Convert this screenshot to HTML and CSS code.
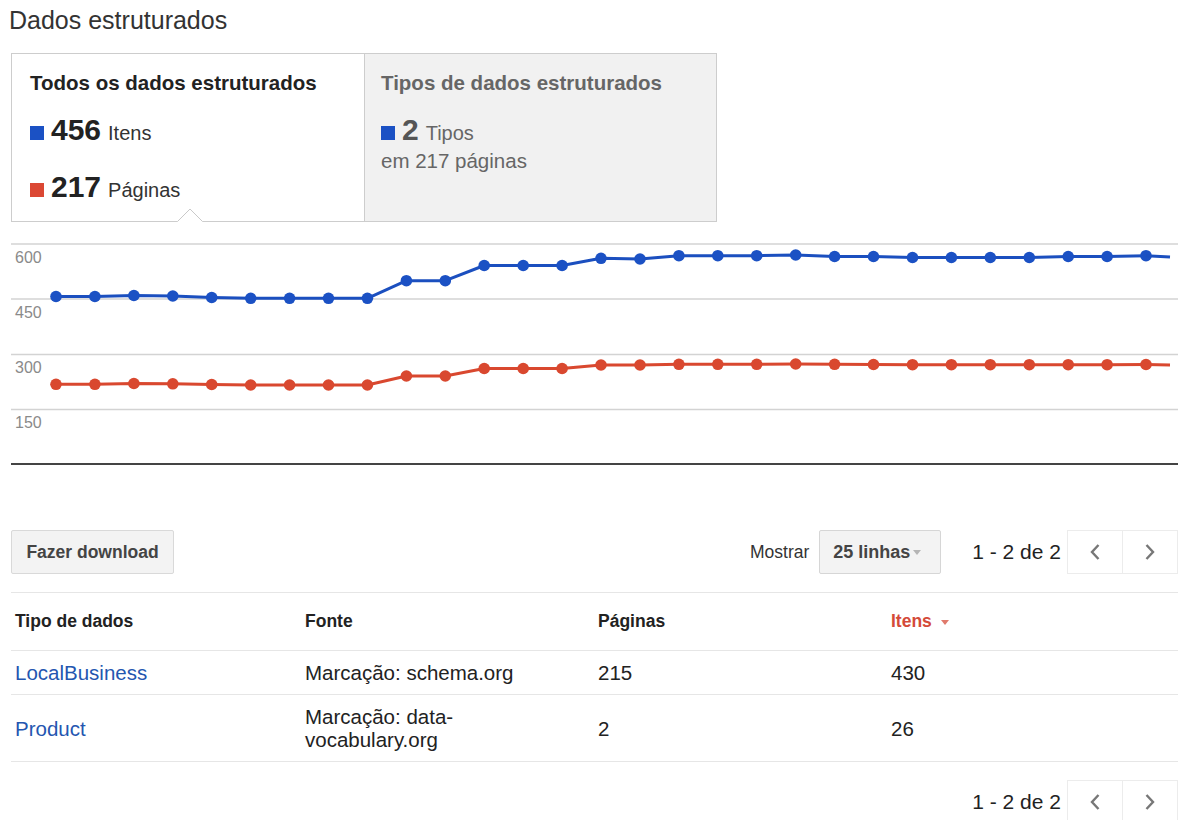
FILE: index.html
```html
<!DOCTYPE html>
<html lang="pt-BR">
<head>
<meta charset="utf-8">
<title>Dados estruturados</title>
<link rel="stylesheet" href="styles.css">
</head>
<body>
<div class="page">
  <h1 class="title">Dados estruturados</h1>

  <div class="tabs">
    <div class="tab tab-active">
      <div class="tab-title">Todos os dados estruturados</div>
      <div class="metric">
        <span class="swatch swatch-blue"></span><span class="metric-value">456</span><span class="metric-unit">Itens</span>
      </div>
      <div class="metric metric-second">
        <span class="swatch swatch-red"></span><span class="metric-value">217</span><span class="metric-unit">Páginas</span>
      </div>
      <svg class="tab-notch" width="26" height="14" viewBox="0 0 26 14">
        <polygon points="0,14 13,1.5 26,14" fill="#fff"/>
        <polyline points="0.5,13.5 13,1 25.5,13.5" fill="none" stroke="#c9c9c9" stroke-width="1"/>
      </svg>
    </div>
    <div class="tab tab-idle">
      <div class="tab-title">Tipos de dados estruturados</div>
      <div class="metric">
        <span class="swatch swatch-blue"></span><span class="metric-value">2</span><span class="metric-unit">Tipos</span>
      </div>
      <div class="metric-note">em 217 páginas</div>
    </div>
  </div>

  <svg class="chart" width="1167" height="250" viewBox="11 222 1167 250">
    <defs>
      <marker id="dot-blue" markerWidth="14" markerHeight="14" refX="7" refY="7" markerUnits="userSpaceOnUse">
        <circle cx="7" cy="7" r="5.8" fill="#1b51c4"/>
      </marker>
      <marker id="dot-red" markerWidth="14" markerHeight="14" refX="7" refY="7" markerUnits="userSpaceOnUse">
        <circle cx="7" cy="7" r="5.8" fill="#d9482f"/>
      </marker>
    </defs>

    <!-- grid -->
    <g class="grid">
      <line x1="11" y1="244" x2="1178" y2="244"/>
      <line x1="11" y1="299" x2="1178" y2="299"/>
      <line x1="11" y1="354.5" x2="1178" y2="354.5"/>
      <line x1="11" y1="409.5" x2="1178" y2="409.5"/>
    </g>
    <line class="axis" x1="11" y1="464" x2="1178" y2="464"/>

    <g class="axis-label">
      <text x="15" y="263">600</text>
      <text x="15" y="318">450</text>
      <text x="15" y="373">300</text>
      <text x="15" y="428">150</text>
    </g>

    <!-- Itens -->
    <polyline class="series series-blue" marker-start="url(#dot-blue)" marker-mid="url(#dot-blue)" marker-end="url(#dot-blue)"
      points="56,296.5 94.9,296.5 133.9,295.5 172.8,296 211.7,297.5 250.7,298.3 289.6,298.3 328.5,298.3 367.4,298.3 406.4,280.7 445.3,280.7 484.2,265.5 523.2,265.5 562.1,265.5 601,258.3 640,259 678.9,255.7 717.8,255.7 756.7,255.7 795.7,255 834.6,256.5 873.5,256.5 912.5,257.5 951.4,257.5 990.3,257.5 1029.3,257.5 1068.2,256.5 1107.1,256.5 1146,255.7"/>
    <line class="series series-blue" x1="1146" y1="255.7" x2="1170" y2="257"/>

    <!-- Páginas -->
    <polyline class="series series-red" marker-start="url(#dot-red)" marker-mid="url(#dot-red)" marker-end="url(#dot-red)"
      points="56,384.3 94.9,384.3 133.9,383.5 172.8,383.8 211.7,384.5 250.7,385 289.6,385 328.5,385 367.4,385 406.4,376 445.3,376 484.2,368.5 523.2,368.5 562.1,368.5 601,365 640,365 678.9,364.3 717.8,364.3 756.7,364.3 795.7,364 834.6,364.3 873.5,364.5 912.5,364.7 951.4,364.7 990.3,364.7 1029.3,364.7 1068.2,364.7 1107.1,364.7 1146,364.5"/>
    <line class="series series-red" x1="1146" y1="364.5" x2="1170" y2="365"/>
  </svg>

  <div class="toolbar">
    <button class="btn-download" type="button">Fazer download</button>
    <div class="toolbar-right">
      <span class="show-label">Mostrar</span>
      <div class="rows-select"><span>25 linhas</span><span class="select-arrow"></span></div>
      <span class="range">1 - 2 de 2</span>
      <div class="pager">
        <button class="pager-btn" type="button" aria-label="Anterior">
          <svg width="12" height="18" viewBox="0 0 12 18"><polyline points="9.5,2 3,9 9.5,16" fill="none" stroke="#777" stroke-width="2.4"/></svg>
        </button>
        <button class="pager-btn" type="button" aria-label="Próxima">
          <svg width="12" height="18" viewBox="0 0 12 18"><polyline points="2.5,2 9,9 2.5,16" fill="none" stroke="#777" stroke-width="2.4"/></svg>
        </button>
      </div>
    </div>
  </div>

  <table class="data-table">
    <colgroup>
      <col class="col-type">
      <col class="col-source">
      <col class="col-pages">
      <col class="col-items">
    </colgroup>
    <thead>
      <tr>
        <th>Tipo de dados</th>
        <th>Fonte</th>
        <th>Páginas</th>
        <th class="sorted">Itens<span class="sort-arrow"></span></th>
      </tr>
    </thead>
    <tbody>
      <tr>
        <td><a href="#">LocalBusiness</a></td>
        <td>Marcação: schema.org</td>
        <td>215</td>
        <td>430</td>
      </tr>
      <tr>
        <td><a href="#">Product</a></td>
        <td>Marcação: data-vocabulary.org</td>
        <td>2</td>
        <td>26</td>
      </tr>
    </tbody>
  </table>

  <div class="pager-row">
    <span class="range">1 - 2 de 2</span>
    <div class="pager">
      <button class="pager-btn" type="button" aria-label="Anterior">
        <svg width="12" height="18" viewBox="0 0 12 18"><polyline points="9.5,2 3,9 9.5,16" fill="none" stroke="#777" stroke-width="2.4"/></svg>
      </button>
      <button class="pager-btn" type="button" aria-label="Próxima">
        <svg width="12" height="18" viewBox="0 0 12 18"><polyline points="2.5,2 9,9 2.5,16" fill="none" stroke="#777" stroke-width="2.4"/></svg>
      </button>
    </div>
  </div>
</div>
</body>
</html>
```
FILE: styles.css
```css
html, body {
  margin: 0;
  background: #fff;
}

body {
  font-family: "Liberation Sans", Arial, sans-serif;
  color: #222;
}

.page {
  padding: 0 0 0 11px;
  width: 1167px;
}

.title {
  margin: 5px 0 18px -2px;
  font-size: 25px;
  line-height: 30px;
  font-weight: normal;
  color: #333;
}

/* summary tabs */
.tabs {
  display: flex;
  width: 704px;
  border: 1px solid #cdcdcd;
}

.tab {
  position: relative;
  box-sizing: border-box;
  height: 167px;
  padding: 17px 18px 0 18px;
}

.tab-active {
  width: 353px;
  background: #fff;
  border-right: 1px solid #cdcdcd;
}

.tab-idle {
  width: 351px;
  background: #f1f1f1;
  padding-left: 16px;
}

.tab-title {
  font-size: 20.5px;
  line-height: 24px;
  font-weight: bold;
  color: #222;
}

.tab-idle .tab-title {
  color: #666;
}

.metric {
  display: flex;
  align-items: baseline;
  margin-top: 18px;
}

.metric-second {
  margin-top: 23px;
}

.swatch {
  display: inline-block;
  width: 14px;
  height: 14px;
  margin-right: 7px;
}

.swatch-blue {
  background: #1b51c4;
}

.swatch-red {
  background: #db4834;
}

.metric-value {
  font-size: 30px;
  line-height: 34px;
  font-weight: bold;
  color: #222;
}

.metric-unit {
  font-size: 20px;
  color: #333;
  margin-left: 7px;
}

.tab-idle .metric-value {
  color: #555;
}

.tab-idle .metric-unit {
  color: #666;
}

.metric-note {
  margin-top: 2px;
  font-size: 20.5px;
  line-height: 24px;
  color: #666;
}

.tab-notch {
  position: absolute;
  left: 165px;
  bottom: -1px;
  display: block;
}

/* chart */
.chart {
  display: block;
}

.grid line {
  stroke: #d3d3d3;
  stroke-width: 1.5;
}

.axis {
  stroke: #444;
  stroke-width: 1.8;
}

.axis-label text {
  font-family: "Liberation Sans", Arial, sans-serif;
  font-size: 16px;
  fill: #8a8a8a;
}

.series {
  fill: none;
  stroke-width: 3;
  stroke-linejoin: round;
}

.series-blue {
  stroke: #1b4fbf;
}

.series-red {
  stroke: #d9482f;
}

/* toolbar */
.toolbar {
  display: flex;
  align-items: center;
  margin-top: 58px;
  height: 44px;
}

.btn-download {
  box-sizing: border-box;
  width: 163px;
  height: 44px;
  padding: 0;
  background: #f3f3f3;
  border: 1px solid #d9d9d9;
  border-radius: 2px;
  font-family: inherit;
  font-size: 17.5px;
  font-weight: bold;
  color: #444;
}

.toolbar-right {
  display: flex;
  align-items: center;
  margin-left: auto;
}

.show-label {
  font-size: 17.5px;
  color: #333;
  margin-right: 10px;
}

.rows-select {
  box-sizing: border-box;
  display: flex;
  align-items: center;
  width: 122px;
  height: 44px;
  padding-left: 13px;
  background: #f3f3f3;
  border: 1px solid #d6d6d6;
  border-radius: 2px;
  font-size: 18px;
  font-weight: bold;
  color: #444;
}

.select-arrow {
  margin-left: auto;
  margin-right: 19px;
  width: 0;
  height: 0;
  border-left: 4px solid transparent;
  border-right: 4px solid transparent;
  border-top: 5px solid #b5b5b5;
}

.range {
  font-size: 21px;
  color: #222;
  margin-left: 31px;
  margin-right: 6px;
}

.pager {
  display: flex;
}

.pager-btn {
  box-sizing: border-box;
  display: flex;
  align-items: center;
  justify-content: center;
  width: 56px;
  height: 44px;
  padding: 0;
  background: #fff;
  border: 1px solid #ececec;
}

.pager-btn + .pager-btn {
  border-left: none;
  width: 55px;
}

/* table */
.data-table {
  margin-top: 18px;
  width: 1167px;
  border-collapse: collapse;
  table-layout: fixed;
}

.col-type { width: 290px; }
.col-source { width: 293px; }
.col-pages { width: 293px; }
.col-items { width: 291px; }

.data-table tr {
  border-top: 1px solid #e6e6e6;
  border-bottom: 1px solid #e6e6e6;
}

.data-table th {
  padding: 18px 4px;
  text-align: left;
  font-size: 17.5px;
  line-height: 21px;
  font-weight: bold;
  color: #222;
}

.data-table th.sorted {
  color: #d44a39;
}

.sort-arrow {
  display: inline-block;
  margin-left: 9px;
  vertical-align: middle;
  width: 0;
  height: 0;
  border-left: 4px solid transparent;
  border-right: 4px solid transparent;
  border-top: 5px solid #e07a6c;
}

.data-table td {
  padding: 10px 24px 10px 4px;
  font-size: 20.5px;
  line-height: 23px;
  color: #222;
  vertical-align: middle;
}

.data-table a {
  color: #2456b0;
  text-decoration: none;
}

.pager-row {
  display: flex;
  align-items: center;
  justify-content: flex-end;
  margin-top: 18px;
  height: 44px;
}
```
